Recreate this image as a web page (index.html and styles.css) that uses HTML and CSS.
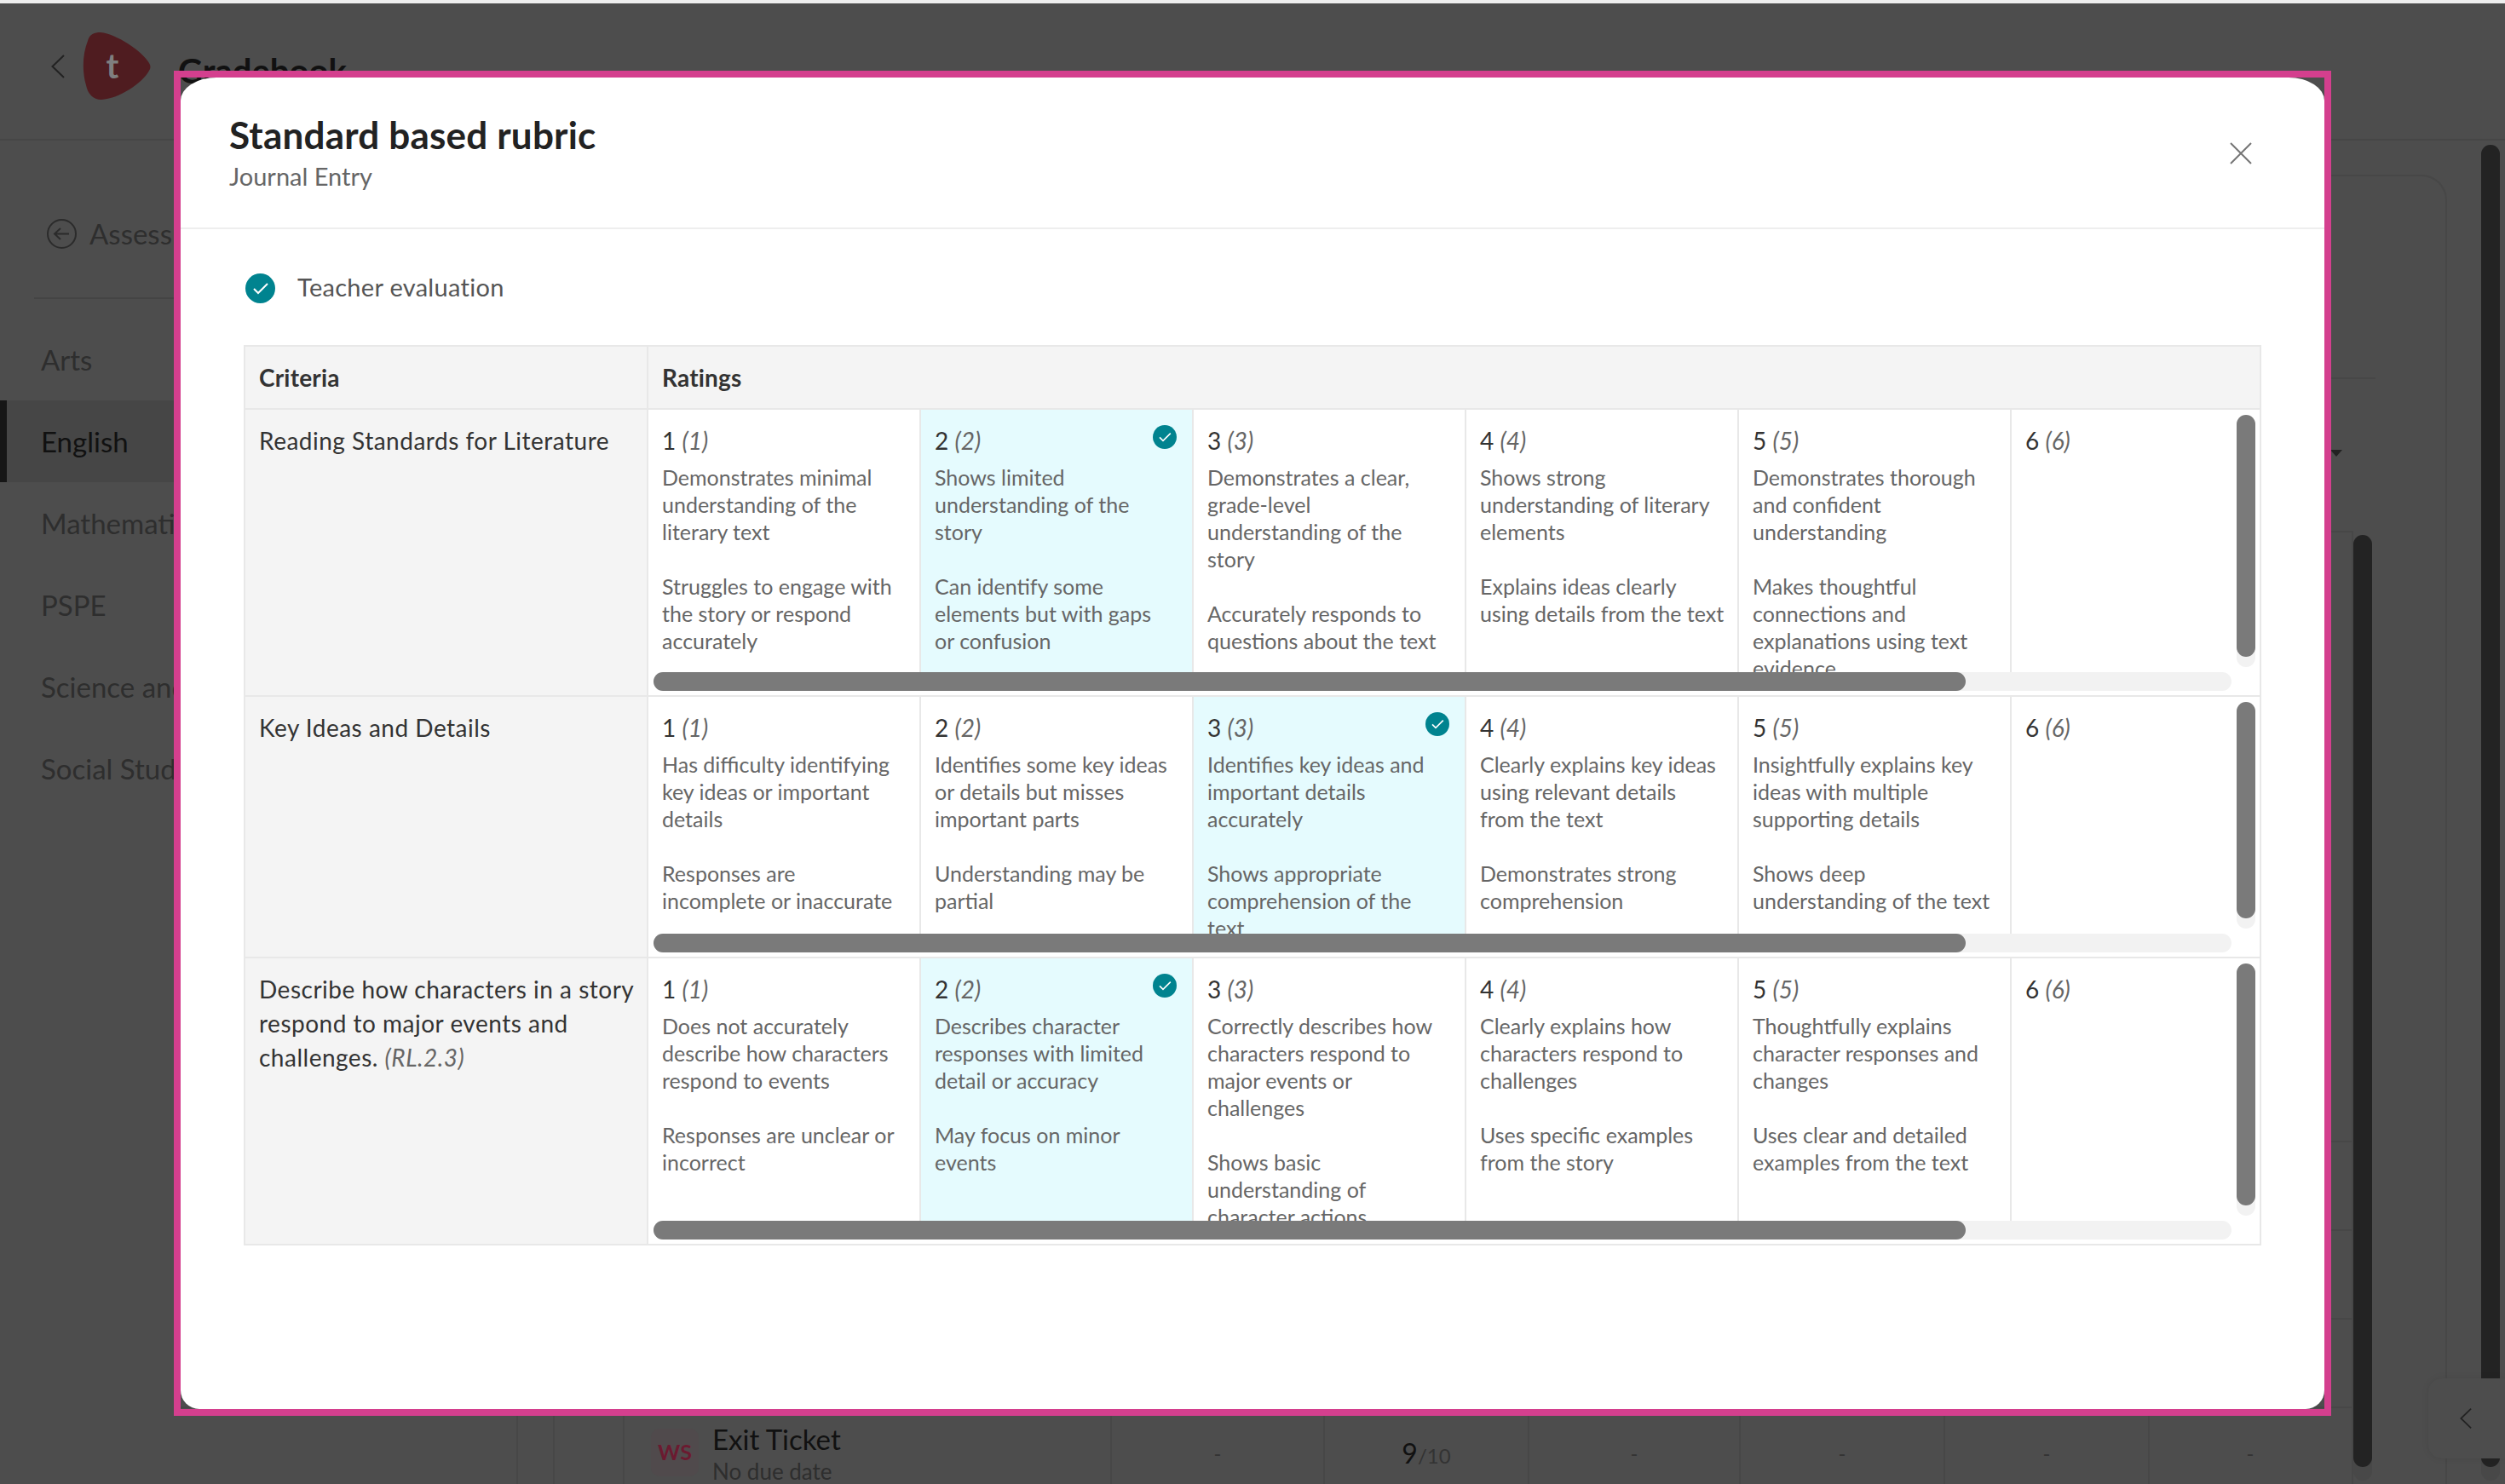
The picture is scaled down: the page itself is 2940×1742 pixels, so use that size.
FILE: index.html
```html
<!DOCTYPE html>
<html lang="en">
<head>
    <meta charset="UTF-8">
    <title>Gradebook</title>
    <link rel="stylesheet" href="styles.css">
</head>
<body>
    <!-- page behind the dialog -->
    <div class="app">
        <div class="topbar">
            <svg class="top-back" viewBox="0 0 16 28"><path d="M15 1 L1.500 14 L15 27"/></svg>
            <svg class="logo" viewBox="0 0 80 80">
                <path d="M6 10 C8 2 14 0 21 0 C40 2 70 22 78 36 C80 39 80 42 78 45 C70 60 42 78 22 79 C12 79 6 72 4 62 C-1 45 0 25 6 10 Z"/>
                <text x="35" y="54" text-anchor="middle">t</text>
            </svg>
            <div class="app-title">Gradebook</div>
        </div>
        <div class="app-body">
            <div class="sidebar">
                <div class="side-back">
                    <svg viewBox="0 0 35 35"><circle cx="17.500" cy="17.500" r="16.500"/><path d="M26 17.500 H9 M16 11 L9 17.500 L16 24"/></svg>
                    <span>Assessments</span>
                </div>
                <div class="side-item">Arts</div>
                <div class="side-item side-active">English</div>
                <div class="side-item">Mathematics</div>
                <div class="side-item">PSPE</div>
                <div class="side-item">Science and Technology</div>
                <div class="side-item">Social Studies</div>
            </div>
            <div class="card">
                <div class="card-head"></div>
                <div class="card-filter"><i class="caret"></i></div>
                <div class="grade-table">
                    <div class="grade-head"></div>
                    <div class="grade-row"></div>
                    <div class="grade-row"></div>
                    <div class="grade-row"></div>
                    <div class="grade-row grade-last">
                        <div class="g-cell"></div>
                        <div class="g-cell"></div>
                        <div class="g-cell"></div>
                        <div class="g-cell g-ticket">
                            <div class="ws-badge">WS</div>
                            <div class="ticket-text">
                                <div class="ticket-name">Exit Ticket</div>
                                <div class="ticket-due">No due date</div>
                            </div>
                        </div>
                        <div class="g-cell g-mark">-</div>
                        <div class="g-cell g-mark g-score"><b>9</b>/10</div>
                        <div class="g-cell g-mark">-</div>
                        <div class="g-cell g-mark">-</div>
                        <div class="g-cell g-mark">-</div>
                        <div class="g-cell g-mark">-</div>
                    </div>
                </div>
            </div>
        </div>
        <div class="page-track page-track-inner"><div class="page-thumb"></div></div>
        <div class="page-track page-track-outer"><div class="page-thumb"></div></div>
        <div class="collapse-btn"><svg viewBox="0 0 16 28"><path d="M15 1 L1.500 14 L15 27"/></svg></div>
    </div>

    <!-- pink frame + dialog -->
    <div class="frame">
        <div class="modal">
            <div class="modal-head">
                <div>
                    <div class="modal-title">Standard based rubric</div>
                    <div class="modal-sub">Journal Entry</div>
                </div>
                <svg class="modal-close" viewBox="0 0 26 26"><path d="M1 1 L25 25 M25 1 L1 25"/></svg>
            </div>
            <div class="modal-body">
                <div class="evaluation">
                    <svg class="check check-big" viewBox="0 0 35 35"><circle cx="17.500" cy="17.500" r="17.500"/><path d="M10 18 L15 23 L26 12"/></svg>
                    <span>Teacher evaluation</span>
                </div>

                <div class="rubric">
                    <div class="rubric-row rubric-head">
                        <div class="criteria">Criteria</div>
                        <div class="ratings-title">Ratings</div>
                    </div>

                    <!-- row 1 -->
                    <div class="rubric-row row-tall">
                        <div class="criteria">Reading Standards for Literature</div>
                        <div class="ratings">
                            <div class="rating-view">
                                <div class="rating">
                                    <div class="score">1 <em>(1)</em></div>
                                    <p>Demonstrates minimal<br>understanding of the<br>literary text</p>
                                    <p>Struggles to engage with<br>the story or respond<br>accurately</p>
                                </div>
                                <div class="rating selected">
                                    <svg class="check check-small" viewBox="0 0 35 35"><circle cx="17.500" cy="17.500" r="17.500"/><path d="M10 18 L15 23 L26 12"/></svg>
                                    <div class="score">2 <em>(2)</em></div>
                                    <p>Shows limited<br>understanding of the<br>story</p>
                                    <p>Can identify some<br>elements but with gaps<br>or confusion</p>
                                </div>
                                <div class="rating">
                                    <div class="score">3 <em>(3)</em></div>
                                    <p>Demonstrates a clear,<br>grade-level<br>understanding of the<br>story</p>
                                    <p>Accurately responds to<br>questions about the text</p>
                                </div>
                                <div class="rating">
                                    <div class="score">4 <em>(4)</em></div>
                                    <p>Shows strong<br>understanding of literary<br>elements</p>
                                    <p>Explains ideas clearly<br>using details from the text</p>
                                </div>
                                <div class="rating">
                                    <div class="score">5 <em>(5)</em></div>
                                    <p>Demonstrates thorough<br>and confident<br>understanding</p>
                                    <p>Makes thoughtful<br>connections and<br>explanations using text<br>evidence</p>
                                </div>
                                <div class="rating">
                                    <div class="score">6 <em>(6)</em></div>
                                </div>
                            </div>
                            <div class="bar-v"><div class="bar-v-thumb"></div></div>
                            <div class="bar-h"><div class="bar-h-thumb"></div></div>
                        </div>
                    </div>

                    <!-- row 2 -->
                    <div class="rubric-row row-short">
                        <div class="criteria">Key Ideas and Details</div>
                        <div class="ratings">
                            <div class="rating-view">
                                <div class="rating">
                                    <div class="score">1 <em>(1)</em></div>
                                    <p>Has difficulty identifying<br>key ideas or important<br>details</p>
                                    <p>Responses are<br>incomplete or inaccurate</p>
                                </div>
                                <div class="rating">
                                    <div class="score">2 <em>(2)</em></div>
                                    <p>Identifies some key ideas<br>or details but misses<br>important parts</p>
                                    <p>Understanding may be<br>partial</p>
                                </div>
                                <div class="rating selected">
                                    <svg class="check check-small" viewBox="0 0 35 35"><circle cx="17.500" cy="17.500" r="17.500"/><path d="M10 18 L15 23 L26 12"/></svg>
                                    <div class="score">3 <em>(3)</em></div>
                                    <p>Identifies key ideas and<br>important details<br>accurately</p>
                                    <p>Shows appropriate<br>comprehension of the<br>text</p>
                                </div>
                                <div class="rating">
                                    <div class="score">4 <em>(4)</em></div>
                                    <p>Clearly explains key ideas<br>using relevant details<br>from the text</p>
                                    <p>Demonstrates strong<br>comprehension</p>
                                </div>
                                <div class="rating">
                                    <div class="score">5 <em>(5)</em></div>
                                    <p>Insightfully explains key<br>ideas with multiple<br>supporting details</p>
                                    <p>Shows deep<br>understanding of the text</p>
                                </div>
                                <div class="rating">
                                    <div class="score">6 <em>(6)</em></div>
                                </div>
                            </div>
                            <div class="bar-v"><div class="bar-v-thumb"></div></div>
                            <div class="bar-h"><div class="bar-h-thumb"></div></div>
                        </div>
                    </div>

                    <!-- row 3 -->
                    <div class="rubric-row row-tall">
                        <div class="criteria">Describe how characters in a story<br>respond to major events and<br>challenges. <em>(RL.2.3)</em></div>
                        <div class="ratings">
                            <div class="rating-view">
                                <div class="rating">
                                    <div class="score">1 <em>(1)</em></div>
                                    <p>Does not accurately<br>describe how characters<br>respond to events</p>
                                    <p>Responses are unclear or<br>incorrect</p>
                                </div>
                                <div class="rating selected">
                                    <svg class="check check-small" viewBox="0 0 35 35"><circle cx="17.500" cy="17.500" r="17.500"/><path d="M10 18 L15 23 L26 12"/></svg>
                                    <div class="score">2 <em>(2)</em></div>
                                    <p>Describes character<br>responses with limited<br>detail or accuracy</p>
                                    <p>May focus on minor<br>events</p>
                                </div>
                                <div class="rating">
                                    <div class="score">3 <em>(3)</em></div>
                                    <p>Correctly describes how<br>characters respond to<br>major events or<br>challenges</p>
                                    <p>Shows basic<br>understanding of<br>character actions</p>
                                </div>
                                <div class="rating">
                                    <div class="score">4 <em>(4)</em></div>
                                    <p>Clearly explains how<br>characters respond to<br>challenges</p>
                                    <p>Uses specific examples<br>from the story</p>
                                </div>
                                <div class="rating">
                                    <div class="score">5 <em>(5)</em></div>
                                    <p>Thoughtfully explains<br>character responses and<br>changes</p>
                                    <p>Uses clear and detailed<br>examples from the text</p>
                                </div>
                                <div class="rating">
                                    <div class="score">6 <em>(6)</em></div>
                                </div>
                            </div>
                            <div class="bar-v"><div class="bar-v-thumb"></div></div>
                            <div class="bar-h"><div class="bar-h-thumb"></div></div>
                        </div>
                    </div>
                </div>
            </div>
        </div>
    </div>
</body>
</html>
```

FILE: styles.css
```css
*{
    margin: 0;
    padding: 0;
    box-sizing: border-box;
}
body{
    width: 2940px;
    height: 1742px;
    overflow: hidden;
    position: relative;
    background-color: #4d4d4d;
    font-family: "Lato", "Noto Sans", sans-serif;
    border-top: 4px solid #eee;
}

/* 背后的页面 */
.app{
    height: 1738px;
    overflow: hidden;
}
.topbar{
    height: 161px;
    display: flex;
    align-items: flex-start;
    border-bottom: 2px solid #464646;
    padding: 34px 0 0 60px;
}
.top-back{
    width: 16px;
    height: 28px;
    margin: 26px 21px 0 0;
    fill: none;
    stroke: #222;
    stroke-width: 2;
}
.logo{
    width: 80px;
    height: 80px;
    fill: #4f1c20;
}
.logo text{
    fill: #7f7f7f;
    font-size: 40px;
    font-weight: 700;
}
.app-title{
    margin: 20px 0 0 32px;
    font-size: 40px;
    line-height: 50px;
    font-weight: 700;
    color: #111;
}
.app-body{
    display: flex;
}
.sidebar{
    width: 205px;
    flex-shrink: 0;
    padding-top: 93px;
    white-space: nowrap;
}
.side-back{
    display: flex;
    align-items: center;
    gap: 15px;
    height: 93px;
    margin-left: 40px;
    padding: 0 0 58px 15px;
    margin-bottom: 23px;
    border-bottom: 2px solid #444;
    font-size: 33px;
    line-height: 35px;
    color: #2e2e2e;
}
.side-back svg{
    width: 35px;
    height: 35px;
    flex-shrink: 0;
    fill: none;
    stroke: #2b2b2b;
    stroke-width: 2;
}
.side-item{
    height: 96px;
    line-height: 96px;
    padding-left: 48px;
    font-size: 33px;
    color: #2e2e2e;
}
.side-active{
    background-color: #464646;
    border-left: 8px solid #161616;
    padding-left: 40px;
    color: #111;
}
.card{
    width: 2667px;
    height: 1600px;
    margin-top: 40px;
    border: 2px solid #474747;
    border-left: none;
    border-radius: 0 30px 0 0;
}
.card-head{
    height: 238px;
    margin-right: 82px;
    border-bottom: 2px solid #474747;
}
.card-filter{
    height: 178px;
    padding: 83px 121px 0 0;
    display: flex;
    justify-content: flex-end;
}
.caret{
    width: 0;
    height: 0;
    border-left: 7px solid transparent;
    border-right: 7px solid transparent;
    border-top: 8px solid #222;
}
.grade-table{
    width: 2557px;
    border-top: 2px solid #474747;
    border-right: 2px solid #474747;
}
.grade-head{
    height: 716px;
    border-bottom: 2px solid #474747;
}
.grade-row{
    height: 104px;
    border-bottom: 2px solid #474747;
}
.grade-last{
    display: grid;
    grid-template-columns: 401px 43px 82px 572px 250px 240px 248px 240px 240px 238px;
    height: 110px;
    border-bottom: none;
}
.g-cell{
    border-left: 2px solid #474747;
}
.g-cell:first-child{
    border-left: none;
}
.g-ticket{
    display: flex;
    gap: 16px;
    padding: 24px 0 0 31px;
}
.ws-badge{
    width: 56px;
    height: 56px;
    line-height: 54px;
    text-align: center;
    border-radius: 10px;
    background-color: #504a4c;
    color: #6b1a30;
    font-size: 25px;
    font-weight: 700;
}
.ticket-text{
    margin-top: -8px;
}
.ticket-name{
    font-size: 33px;
    line-height: 40px;
    color: #111;
    white-space: nowrap;
}
.ticket-due{
    margin-top: 2px;
    font-size: 26px;
    line-height: 32px;
    color: #2e2e2e;
    white-space: nowrap;
}
.g-mark{
    padding-top: 33px;
    line-height: 40px;
    text-align: center;
    font-size: 24px;
    color: #333;
}
.g-score b{
    font-size: 32px;
    font-weight: 400;
    color: #111;
}
.page-track{
    position: absolute;
    width: 22px;
    bottom: 4px;
    border-radius: 11px;
    background-color: #484848;
}
.page-track-inner{
    left: 2762px;
    top: 624px;
}
.page-track-outer{
    left: 2912px;
    top: 166px;
}
.page-thumb{
    width: 22px;
    height: calc(100% - 16px);
    border-radius: 11px;
    background-color: #232323;
}
.collapse-btn{
    position: absolute;
    left: 2850px;
    top: 1614px;
    width: 90px;
    height: 94px;
    display: flex;
    align-items: center;
    padding-left: 37px;
    border-radius: 16px 0 0 16px;
    background-color: #4d4d4d;
    box-shadow: 0 0 8px rgba(0, 0, 0, .08);
}
.collapse-btn svg{
    width: 14px;
    height: 28px;
    fill: none;
    stroke: #222;
    stroke-width: 2;
}

/* 弹窗 */
.frame{
    position: absolute;
    left: 204px;
    top: 79px;
    width: 2532px;
    height: 1579px;
    border: 8px solid #d43f8e;
}
.modal{
    height: 100%;
    background-color: #fff;
    border-radius: 42px 42px 22px 22px / 27px 27px 22px 22px;
    overflow: hidden;
}
.modal-head{
    height: 178px;
    display: flex;
    justify-content: space-between;
    padding: 42px 85px 0 57px;
    border-bottom: 2px solid #eee;
}
.modal-title{
    font-size: 44px;
    line-height: 50px;
    font-weight: 700;
    letter-spacing: .2px;
    color: #222;
}
.modal-sub{
    margin-top: 6px;
    font-size: 29px;
    line-height: 36px;
    color: #666;
}
.modal-close{
    width: 26px;
    height: 26px;
    margin-top: 34px;
    fill: none;
    stroke: #757575;
    stroke-width: 2;
}
.modal-body{
    padding: 52px 74px 0;
}
.evaluation{
    display: flex;
    align-items: center;
    gap: 26px;
    height: 35px;
    margin: 0 0 49px 2px;
    font-size: 29px;
    letter-spacing: .3px;
    line-height: 32px;
    color: #555;
}
.evaluation span{
    padding-bottom: 3px;
}
.check circle{
    fill: #00838f;
}
.check path{
    fill: none;
    stroke: #fff;
    stroke-width: 2;
}
.check-big{
    width: 35px;
    height: 35px;
}
.check-small{
    position: absolute;
    top: 18px;
    right: 18px;
    width: 28px;
    height: 28px;
}

/* 表格 */
.rubric{
    width: 2368px;
    border: 2px solid #e8e8e8;
    border-bottom: none;
}
.rubric-row{
    display: flex;
    border-bottom: 2px solid #e8e8e8;
}
.rubric-head{
    height: 74px;
    background-color: #f4f4f4;
    font-size: 28px;
    line-height: 40px;
    color: #333;
}
.rubric-head .criteria,
.ratings-title{
    font-weight: 700;
    letter-spacing: .2px;
}
.row-tall{
    height: 337px;
}
.row-short{
    height: 307px;
}
.criteria{
    width: 473px;
    flex-shrink: 0;
    padding: 16px 0 16px 16px;
    background-color: #f4f4f4;
    border-right: 2px solid #e8e8e8;
    font-size: 28px;
    line-height: 40px;
    letter-spacing: .5px;
    color: #333;
    white-space: nowrap;
}
.criteria em{
    color: #666;
}
.ratings-title{
    padding: 16px;
}
.ratings{
    flex: 1;
    position: relative;
    overflow: hidden;
}
.rating-view{
    display: flex;
    height: calc(100% - 27px);
    overflow: hidden;
}
.rating{
    width: 320px;
    flex-shrink: 0;
    position: relative;
    padding: 16px;
    border-right: 2px solid #e8e8e8;
    font-size: 25px;
    line-height: 32px;
    color: #666;
    white-space: nowrap;
}
.rating:last-child{
    border-right: none;
}
.selected{
    background-color: #e5fbfe;
}
.score{
    font-size: 28px;
    line-height: 40px;
    color: #333;
    margin-bottom: 7px;
}
.score em{
    color: #666;
}
.rating p + p{
    margin-top: 32px;
}

/* 滚动条 */
.bar-h{
    position: absolute;
    left: 6px;
    bottom: 5px;
    width: 1852px;
    height: 22px;
    border-radius: 11px;
    background-color: #f2f2f2;
}
.bar-h-thumb{
    width: 1540px;
    height: 22px;
    border-radius: 11px;
    background-color: #7a7a7a;
}
.bar-v{
    position: absolute;
    top: 6px;
    right: 5px;
    bottom: 33px;
    width: 22px;
    border-radius: 11px;
    background-color: #f2f2f2;
}
.bar-v-thumb{
    width: 22px;
    height: calc(100% - 12px);
    border-radius: 11px;
    background-color: #7a7a7a;
}
```
